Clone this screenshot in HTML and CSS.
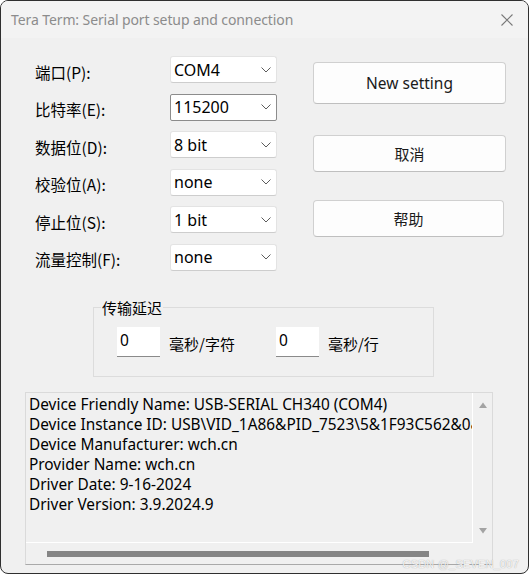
FILE: index.html
```html
<!DOCTYPE html>
<html lang="zh-CN">
<head>
<meta charset="utf-8">
<title>Tera Term: Serial port setup and connection</title>
<link rel="stylesheet" href="styles.css">
</head>
<body>
<div class="window">
  <div class="titlebar">
    <span class="title">Tera Term: Serial port setup and connection</span>
    <svg class="close" width="12" height="12" viewBox="0 0 12 12"><path d="M0.5 0.5 L11.5 11.5 M11.5 0.5 L0.5 11.5" stroke="#7a7a7a" stroke-width="1.1" fill="none"/></svg>
  </div>
  <div class="top">
    <div class="form">
      <label class="lbl">端口(P):</label>
      <div class="combo"><span>COM4</span><svg class="chev" width="10" height="6" viewBox="0 0 10 6"><path d="M0.5 0.5 L5 5 L9.5 0.5" stroke="#5c5c5c" fill="none"/></svg></div>
      <label class="lbl">比特率(E):</label>
      <div class="combo focus"><span>115200</span><svg class="chev" width="10" height="6" viewBox="0 0 10 6"><path d="M0.5 0.5 L5 5 L9.5 0.5" stroke="#5c5c5c" fill="none"/></svg></div>
      <label class="lbl">数据位(D):</label>
      <div class="combo"><span>8 bit</span><svg class="chev" width="10" height="6" viewBox="0 0 10 6"><path d="M0.5 0.5 L5 5 L9.5 0.5" stroke="#5c5c5c" fill="none"/></svg></div>
      <label class="lbl">校验位(A):</label>
      <div class="combo"><span>none</span><svg class="chev" width="10" height="6" viewBox="0 0 10 6"><path d="M0.5 0.5 L5 5 L9.5 0.5" stroke="#5c5c5c" fill="none"/></svg></div>
      <label class="lbl">停止位(S):</label>
      <div class="combo"><span>1 bit</span><svg class="chev" width="10" height="6" viewBox="0 0 10 6"><path d="M0.5 0.5 L5 5 L9.5 0.5" stroke="#5c5c5c" fill="none"/></svg></div>
      <label class="lbl">流量控制(F):</label>
      <div class="combo"><span>none</span><svg class="chev" width="10" height="6" viewBox="0 0 10 6"><path d="M0.5 0.5 L5 5 L9.5 0.5" stroke="#5c5c5c" fill="none"/></svg></div>
    </div>
    <div class="buttons">
      <button class="btn btn-new">New setting</button>
      <button class="btn btn-cancel">取消</button>
      <button class="btn btn-help">帮助</button>
    </div>
  </div>
  <fieldset class="group">
    <legend>传输延迟</legend>
    <div class="delay">
      <div class="num">0</div><span class="unit unit1">毫秒/字符</span>
      <div class="num">0</div><span class="unit">毫秒/行</span>
    </div>
  </fieldset>
  <div class="info">
    <div class="info-main">
      <div class="text">
        <div>Device Friendly Name: USB-SERIAL CH340 (COM4)</div>
        <div>Device Instance ID: USB\VID_1A86&amp;PID_7523\5&amp;1F93C562&amp;0&amp;3</div>
        <div>Device Manufacturer: wch.cn</div>
        <div>Provider Name: wch.cn</div>
        <div>Driver Date: 9-16-2024</div>
        <div>Driver Version: 3.9.2024.9</div>
      </div>
      <div class="vscroll">
        <svg width="10" height="8" viewBox="0 0 10 8"><path d="M1 7 L5 1.5 L9 7 Z" fill="#a3a3a3"/></svg>
        <svg width="10" height="8" viewBox="0 0 10 8"><path d="M1 1 L5 6.5 L9 1 Z" fill="#a3a3a3"/></svg>
      </div>
    </div>
    <div class="hscroll"><div class="thumb"></div></div>
  </div>
  <div class="watermark">CSDN @_SEVEN_007</div>
</div>
</body>
</html>
```
FILE: styles.css
```css
html, body {
  margin: 0;
  padding: 0;
  background: #ffffff;
}
.window {
  position: relative;
  width: 529px;
  height: 574px;
  box-sizing: border-box;
  border: 1px solid #2f2f2f;
  border-radius: 8px;
  background: #f0f0f0;
  overflow: hidden;
  font-family: "Noto Sans", "Noto Sans CJK SC", sans-serif;
  color: #000;
}
.titlebar {
  height: 37px;
  background: #f3f3f3;
  display: flex;
  align-items: center;
  justify-content: space-between;
  padding: 0 15px 0 10px;
}
.title {
  font-size: 14px;
  color: #8c8c8c;
  letter-spacing: -0.1px;
}
.close {
  display: block;
  margin-top: 1px;
}
.top {
  display: flex;
  padding: 18px 0 0 34px;
}
.form {
  display: grid;
  grid-template-columns: 135px 107px;
  grid-auto-rows: 27px;
  row-gap: 10.5px;
}
.lbl {
  font-size: 15.5px;
  display: flex;
  align-items: center;
  padding-top: 4px;
  font-family: "Noto Sans CJK SC", sans-serif;
  white-space: nowrap;
}
.combo {
  box-sizing: border-box;
  background: #ffffff;
  border: 1px solid #e3e3e3;
  border-bottom-color: #cdcdcd;
  border-radius: 3px;
  display: flex;
  align-items: center;
  justify-content: space-between;
  padding: 0 5px 0 3px;
  font-size: 16px;
}
.combo.focus {
  border: 1px solid #8c8c8c;
  border-radius: 2px;
}
.chev {
  display: block;
}
.buttons {
  display: flex;
  flex-direction: column;
  margin-left: 36px;
  padding-top: 6px;
}
.btn {
  box-sizing: border-box;
  width: 193px;
  background: #fdfdfd;
  border: 1px solid #d0d0d0;
  border-bottom-color: #bfbfbf;
  border-radius: 4px;
  font-family: "Noto Sans", "Noto Sans CJK SC", sans-serif;
  font-size: 15.5px;
  color: #1a1a1a;
  padding: 0;
  margin: 0;
}
.btn-cancel, .btn-help {
  font-size: 15px;
}
.btn-new { height: 42px; }
.btn-cancel { height: 37px; margin-top: 31px; }
.btn-help { height: 37px; margin-top: 28px; width: 191px; }
.group {
  box-sizing: border-box;
  width: 341px;
  height: 78px;
  margin: 28px 0 0 92px;
  padding: 0;
  border: 1px solid #dcdcdc;
  min-width: 0;
}
.group legend {
  font-family: "Noto Sans CJK SC", sans-serif;
  font-size: 15px;
  line-height: 18px;
  padding: 0 1px;
  margin-left: 7px;
}
.delay {
  display: flex;
  align-items: center;
  margin: 10px 0 0 23px;
}
.num {
  box-sizing: border-box;
  width: 43px;
  height: 30px;
  background: #ffffff;
  border-bottom: 1px solid #8a8a8a;
  font-size: 15.5px;
  padding: 2px 0 0 3px;
}
.unit {
  font-family: "Noto Sans CJK SC", sans-serif;
  font-size: 15px;
  margin-left: 9px;
  padding-top: 3px;
}
.unit1 {
  margin-right: 41px;
}
.info {
  box-sizing: border-box;
  width: 468px;
  height: 173px;
  margin: 15px 0 0 24px;
  border: 1px solid #dadada;
  border-bottom-color: #a9a9a9;
  display: flex;
  flex-direction: column;
}
.info-main {
  display: flex;
  height: 150px;
}
.text {
  box-sizing: border-box;
  width: 447px;
  overflow: hidden;
  white-space: nowrap;
  font-size: 15.4px;
  line-height: 20px;
  padding: 2px 0 0 3px;
  border-right: 1px solid #ffffff;
  border-bottom: 1px solid #ffffff;
}
.vscroll {
  flex: 1;
  display: flex;
  flex-direction: column;
  align-items: center;
  justify-content: space-between;
  padding: 8px 0 8px 0;
}
.vscroll svg {
  display: block;
}
.hscroll {
  flex: 1;
  display: flex;
  align-items: center;
  padding-left: 21px;
}
.thumb {
  width: 382px;
  height: 6px;
  background: #858585;
  margin-top: 1px;
}
.watermark {
  position: absolute;
  right: 9px;
  bottom: 3px;
  font-family: "Liberation Sans", sans-serif;
  font-size: 11px;
  color: rgba(255, 255, 255, 0.9);
  text-shadow: 0 0 1px rgba(110, 110, 110, 0.7);
  letter-spacing: 0.2px;
}
```
